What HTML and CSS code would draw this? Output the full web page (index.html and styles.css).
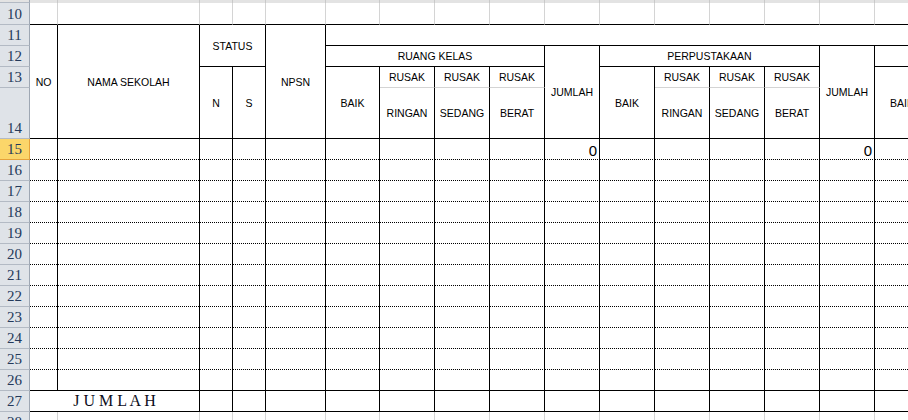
FILE: index.html
```html
<!DOCTYPE html>
<html lang="id">
<head>
<meta charset="utf-8">
<title>Sheet</title>
<link rel="stylesheet" href="styles.css">
</head>
<body>
<div class="sheet">
<table class="grid">
<colgroup>
<col class="w-h"><col class="w-a"><col class="w-b"><col class="w-c"><col class="w-c"><col class="w-e"><col class="w-f">
<col class="w-n"><col class="w-n"><col class="w-n"><col class="w-n"><col class="w-n"><col class="w-n"><col class="w-n"><col class="w-n"><col class="w-n"><col class="w-n">
</colgroup>
<tbody>
<tr class="r-strip"><th class="rh strip"></th><td class="strip"></td><td class="strip"></td><td class="strip"></td><td class="strip"></td><td class="strip"></td><td class="strip"></td><td class="strip"></td><td class="strip"></td><td class="strip"></td><td class="strip"></td><td class="strip"></td><td class="strip"></td><td class="strip"></td><td class="strip"></td><td class="strip"></td><td class="strip"></td></tr>
<tr class="r10"><th class="rh">10</th><td class="gb"></td><td class="gb"></td><td class="gb"></td><td class="gb"></td><td class="gb"></td><td class="gb"></td><td class="gb"></td><td class="gb"></td><td class="gb"></td><td class="gb"></td><td class="gb"></td><td class="gb"></td><td class="gb"></td><td class="gb"></td><td class="gb"></td><td class="gb"></td></tr>
<tr class="r"><th class="rh">11</th><td class="hd" rowspan="4">NO</td><td class="hd" rowspan="4">NAMA SEKOLAH</td><td class="hd" colspan="2" rowspan="2">STATUS</td><td class="hd" rowspan="4">NPSN</td><td class="hd nr" colspan="11"></td></tr>
<tr class="r"><th class="rh">12</th><td class="hd" colspan="4">RUANG KELAS</td><td class="hd" rowspan="3">JUMLAH</td><td class="hd" colspan="4">PERPUSTAKAAN</td><td class="hd" rowspan="3">JUMLAH</td><td class="hd nr"></td></tr>
<tr class="r"><th class="rh">13</th><td class="hd" rowspan="2">N</td><td class="hd" rowspan="2">S</td><td class="hd" rowspan="2">BAIK</td><td class="hd gl">RUSAK</td><td class="hd gl">RUSAK</td><td class="hd gl">RUSAK</td><td class="hd" rowspan="2">BAIK</td><td class="hd gl">RUSAK</td><td class="hd gl">RUSAK</td><td class="hd gl">RUSAK</td><td class="hd" rowspan="2">BAIK</td></tr>
<tr class="r14"><th class="rh">14</th><td class="hd">RINGAN</td><td class="hd">SEDANG</td><td class="hd">BERAT</td><td class="hd">RINGAN</td><td class="hd">SEDANG</td><td class="hd">BERAT</td></tr>
<tr class="r"><th class="rh sel">15</th><td class="d"></td><td class="d"></td><td class="d"></td><td class="d"></td><td class="d"></td><td class="d"></td><td class="d"></td><td class="d"></td><td class="d"></td><td class="d num">0</td><td class="d"></td><td class="d"></td><td class="d"></td><td class="d"></td><td class="d num">0</td><td class="d"></td></tr>
<tr class="r"><th class="rh">16</th><td class="d"></td><td class="d"></td><td class="d"></td><td class="d"></td><td class="d"></td><td class="d"></td><td class="d"></td><td class="d"></td><td class="d"></td><td class="d"></td><td class="d"></td><td class="d"></td><td class="d"></td><td class="d"></td><td class="d"></td><td class="d"></td></tr>
<tr class="r"><th class="rh">17</th><td class="d"></td><td class="d"></td><td class="d"></td><td class="d"></td><td class="d"></td><td class="d"></td><td class="d"></td><td class="d"></td><td class="d"></td><td class="d"></td><td class="d"></td><td class="d"></td><td class="d"></td><td class="d"></td><td class="d"></td><td class="d"></td></tr>
<tr class="r"><th class="rh">18</th><td class="d"></td><td class="d"></td><td class="d"></td><td class="d"></td><td class="d"></td><td class="d"></td><td class="d"></td><td class="d"></td><td class="d"></td><td class="d"></td><td class="d"></td><td class="d"></td><td class="d"></td><td class="d"></td><td class="d"></td><td class="d"></td></tr>
<tr class="r"><th class="rh">19</th><td class="d"></td><td class="d"></td><td class="d"></td><td class="d"></td><td class="d"></td><td class="d"></td><td class="d"></td><td class="d"></td><td class="d"></td><td class="d"></td><td class="d"></td><td class="d"></td><td class="d"></td><td class="d"></td><td class="d"></td><td class="d"></td></tr>
<tr class="r"><th class="rh">20</th><td class="d"></td><td class="d"></td><td class="d"></td><td class="d"></td><td class="d"></td><td class="d"></td><td class="d"></td><td class="d"></td><td class="d"></td><td class="d"></td><td class="d"></td><td class="d"></td><td class="d"></td><td class="d"></td><td class="d"></td><td class="d"></td></tr>
<tr class="r"><th class="rh">21</th><td class="d"></td><td class="d"></td><td class="d"></td><td class="d"></td><td class="d"></td><td class="d"></td><td class="d"></td><td class="d"></td><td class="d"></td><td class="d"></td><td class="d"></td><td class="d"></td><td class="d"></td><td class="d"></td><td class="d"></td><td class="d"></td></tr>
<tr class="r"><th class="rh">22</th><td class="d"></td><td class="d"></td><td class="d"></td><td class="d"></td><td class="d"></td><td class="d"></td><td class="d"></td><td class="d"></td><td class="d"></td><td class="d"></td><td class="d"></td><td class="d"></td><td class="d"></td><td class="d"></td><td class="d"></td><td class="d"></td></tr>
<tr class="r"><th class="rh">23</th><td class="d"></td><td class="d"></td><td class="d"></td><td class="d"></td><td class="d"></td><td class="d"></td><td class="d"></td><td class="d"></td><td class="d"></td><td class="d"></td><td class="d"></td><td class="d"></td><td class="d"></td><td class="d"></td><td class="d"></td><td class="d"></td></tr>
<tr class="r"><th class="rh">24</th><td class="d"></td><td class="d"></td><td class="d"></td><td class="d"></td><td class="d"></td><td class="d"></td><td class="d"></td><td class="d"></td><td class="d"></td><td class="d"></td><td class="d"></td><td class="d"></td><td class="d"></td><td class="d"></td><td class="d"></td><td class="d"></td></tr>
<tr class="r"><th class="rh">25</th><td class="d"></td><td class="d"></td><td class="d"></td><td class="d"></td><td class="d"></td><td class="d"></td><td class="d"></td><td class="d"></td><td class="d"></td><td class="d"></td><td class="d"></td><td class="d"></td><td class="d"></td><td class="d"></td><td class="d"></td><td class="d"></td></tr>
<tr class="r"><th class="rh">26</th><td></td><td></td><td></td><td></td><td></td><td></td><td></td><td></td><td></td><td></td><td></td><td></td><td></td><td></td><td></td><td></td></tr>
<tr class="r"><th class="rh">27</th><td class="total" colspan="2">J U M L A H</td><td></td><td></td><td></td><td></td><td></td><td></td><td></td><td></td><td></td><td></td><td></td><td></td><td></td><td></td></tr>
<tr class="r"><th class="rh">28</th><td class="g"></td><td class="g"></td><td class="g"></td><td class="g"></td><td class="g"></td><td class="g"></td><td class="g"></td><td class="g"></td><td class="g"></td><td class="g"></td><td class="g"></td><td class="g"></td><td class="g"></td><td class="g"></td><td class="g"></td><td class="g"></td></tr>
</tbody>
</table>
</div>
</body>
</html>
```
FILE: styles.css
```css
html, body {
  margin: 0;
  padding: 0;
  background: #ffffff;
  overflow: hidden;
}
.sheet {
  width: 908px;
  height: 420px;
  overflow: hidden;
}
.grid {
  border-collapse: separate;
  border-spacing: 0;
  table-layout: fixed;
  width: 930px;
  font-family: "Liberation Sans", Arial, sans-serif;
  font-size: 10.5px;
  color: #000;
}
.w-h { width: 30px; }
.w-a { width: 28px; }
.w-b { width: 142px; }
.w-c { width: 33px; }
.w-e { width: 60px; }
.w-f { width: 54px; }
.w-n { width: 55px; }

.grid td, .grid th {
  padding: 0;
  border-top: 0;
  border-left: 0;
  border-right: 1px solid #000;
  border-bottom: 1px solid #000;
  overflow: hidden;
  white-space: nowrap;
}
.r-strip { height: 3px; }
.r10 { height: 22px; }
.r { height: 21px; }
.r14 { height: 51px; }

.rh {
  background: #dfe3e8;
  border-right: 1px solid #9ea7b3 !important;
  border-bottom: 1px solid #b3bac4 !important;
  font-family: "Liberation Serif", "Times New Roman", serif;
  font-weight: normal;
  font-size: 15px;
  line-height: 17px;
  color: #24395a;
  text-align: center;
  vertical-align: bottom;
  padding-bottom: 1px !important;
}
.rh.sel {
  background: #fbd66a;
  border-right: 1px solid #e6a23a !important;
  border-bottom: 1px solid #e6a23a !important;
  color: #24395a;
}
.grid .strip {
  background: #e3e3e3;
  border-right: 1px solid #c9c9c9;
  border-bottom: 0;
  padding: 0 !important;
  font-size: 0;
  line-height: 0;
}
.grid .gb {
  border-right: 1px solid #d4d4d4;
}
.grid .g {
  border-right: 1px solid #d4d4d4;
  border-bottom: 1px solid #d4d4d4;
}
.hd {
  text-align: center;
  vertical-align: middle;
  line-height: 12px;
}
.grid .nr {
  border-right: 0;
}
.grid .gl {
  border-bottom: 1px solid #d4d4d4;
}
.grid .d {
  border-bottom: 0;
  padding-bottom: 1px;
  background-image: linear-gradient(to right, #000 1px, transparent 1px);
  background-size: 2px 1px;
  background-position: left bottom;
  background-repeat: repeat-x;
}
.num {
  text-align: right;
  vertical-align: bottom;
  font-size: 15px;
  line-height: 17px;
  padding-right: 2px !important;
}
.total {
  text-align: center;
  vertical-align: middle;
  font-family: "Liberation Serif", "Times New Roman", serif;
  font-size: 16px;
  line-height: 18px;
  color: #0d0d1a;
}
```
